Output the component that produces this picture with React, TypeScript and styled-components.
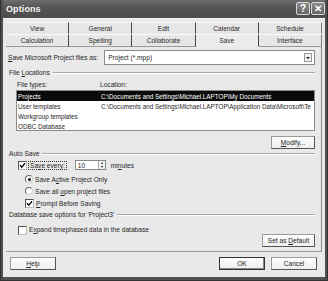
import React from 'react';
import styled, { createGlobalStyle } from 'styled-components';

const GlobalStyle = createGlobalStyle`
	html, body {
		margin: 0;
		padding: 0;
		background: #4a4a4a;
	}
	* {
		box-sizing: border-box;
	}
`;

const Window = styled.div`
	width: 328px;
	height: 281px;
	display: flex;
	flex-direction: column;
	background: #505050;
	border: 1px solid #333;
	border-top: none;
	padding: 0 2px 3px 2px;
	font-family: 'Liberation Sans', Arial, sans-serif;
	font-size: 6.6px;
	color: #262626;
	overflow: hidden;
`;

const TitleBar = styled.div`
	height: 18px;
	flex-shrink: 0;
	display: flex;
	align-items: center;
	justify-content: space-between;
	padding: 0 0 1px 3px;
	background: linear-gradient(#6e6e6e, #555 40%, #4c4c4c);
`;

const TitleText = styled.span`
	color: #f4f4f4;
	font-size: 9px;
	font-weight: bold;
	letter-spacing: 0.1px;
`;

const CaptionButtons = styled.div`
	display: flex;
	gap: 1px;
`;

const CaptionButton = styled.div`
	width: 14px;
	height: 13px;
	border: 1px solid #d8d8d8;
	border-radius: 2px;
	background: linear-gradient(#8a8a8a, #666);
	color: #fff;
	font-size: 10px;
	font-weight: bold;
	display: flex;
	align-items: center;
	justify-content: center;
	line-height: 1;
`;

const Body = styled.div`
	flex: 1;
	display: flex;
	flex-direction: column;
	background: #e9e9e9;
	padding: 3px 3px 0 3px;
	border-top: 1px solid #f6f6f6;
`;

const TabStrip = styled.div`
	display: flex;
	flex-direction: column;
`;

const TabRow = styled.div<{ $height: number }>`
	display: grid;
	grid-template-columns: repeat(5, 1fr);
	height: ${({ $height }) => $height}px;
`;

const Tab = styled.div<{ $active?: boolean; $bottom?: boolean; $last?: boolean }>`
	display: flex;
	align-items: center;
	justify-content: center;
	border-right: ${({ $last }) => ($last ? '1px solid #777' : '1.5px solid #444')};
	border-top: 1px solid #fafafa;
	border-bottom: ${({ $active, $bottom }) =>
		$bottom && !$active ? '1px solid #9a9a9a' : '1px solid transparent'};
	background: ${({ $active }) => ($active ? '#ececec' : '#e6e6e6')};
	color: #2a2a2a;
`;

const Panel = styled.div`
	flex: 0 0 205px;
	display: flex;
	flex-direction: column;
	padding: 3px 6px 0 2px;
	border-right: 1px solid #888;
	border-bottom: 1px solid #999;
`;

const Row = styled.div<{ $mt?: number; $h?: number; $indent?: number }>`
	display: flex;
	align-items: center;
	margin-top: ${({ $mt }) => $mt ?? 0}px;
	height: ${({ $h }) => ($h ? `${$h}px` : 'auto')};
	padding-left: ${({ $indent }) => $indent ?? 0}px;
`;

const Label = styled.span<{ $w?: number }>`
	white-space: nowrap;
	width: ${({ $w }) => ($w ? `${$w}px` : 'auto')};
	flex-shrink: 0;
`;

const Select = styled.div`
	margin-left: 6px;
	flex: 1;
	height: 15px;
	display: flex;
	align-items: center;
	justify-content: space-between;
	padding: 0 2px 0 3px;
	background: #fff;
	border: 1px solid #8a8a8a;
`;

const DropArrow = styled.div`
	width: 8px;
	height: 9px;
	border: 1px solid #999;
	background: #f2f2f2;
	display: flex;
	align-items: center;
	justify-content: center;
	&::after {
		content: '';
		border-left: 2px solid transparent;
		border-right: 2px solid transparent;
		border-top: 2.5px solid #111;
	}
`;

const GroupHeader = styled.div<{ $mt?: number }>`
	display: flex;
	align-items: center;
	gap: 3px;
	height: 9px;
	margin-top: ${({ $mt }) => $mt ?? 0}px;
	padding-left: 1px;
	&::after {
		content: '';
		flex: 1;
		border-top: 1px solid #a8a8a8;
		border-bottom: 1px solid #fff;
	}
`;

const ListBox = styled.div`
	margin: 1px 0 0 8px;
	height: 41px;
	background: #fff;
	border: 1px solid #8a8a8a;
`;

const ListItem = styled.div<{ $selected?: boolean }>`
	display: flex;
	height: 10px;
	align-items: center;
	padding-left: 1px;
	white-space: nowrap;
	overflow: hidden;
	font-size: 6.3px;
	background: ${({ $selected }) => ($selected ? '#0a0a0a' : 'transparent')};
	color: ${({ $selected }) => ($selected ? '#fff' : '#262626')};
`;

const Button = styled.div<{ $w: number }>`
	width: ${({ $w }) => $w}px;
	height: 13px;
	display: flex;
	align-items: center;
	justify-content: center;
	white-space: nowrap;
	background: linear-gradient(#fdfdfd, #eee);
	border: 1px solid #9a9a9a;
	border-right-color: #555;
	border-bottom-color: #555;
	color: #262626;
	flex-shrink: 0;
`;

const DefaultButton = styled(Button)`
	border: 1px solid #333;
	box-shadow: inset -1px -1px 0 #888;
`;

const Box = styled.div`
	width: 9px;
	height: 9px;
	flex-shrink: 0;
	background: #fff;
	border: 1px solid #555;
	border-right-color: #bbb;
	border-bottom-color: #bbb;
	margin-right: 2px;
	display: flex;
	align-items: center;
	justify-content: center;
`;

const Radio = styled.div<{ $on?: boolean }>`
	width: 8px;
	height: 8px;
	flex-shrink: 0;
	border-radius: 50%;
	background: #fff;
	border: 1px solid #666;
	border-right-color: #ccc;
	border-bottom-color: #ccc;
	margin-right: 2px;
	display: flex;
	align-items: center;
	justify-content: center;
	&::after {
		content: '';
		width: 3px;
		height: 3px;
		border-radius: 50%;
		background: ${({ $on }) => ($on ? '#111' : 'transparent')};
	}
`;

const Focus = styled.span`
	outline: 1px dotted #333;
	outline-offset: 0;
	padding: 0 1px;
	white-space: nowrap;
`;

const SpinBox = styled.div`
	margin-left: 9px;
	width: 31px;
	height: 10px;
	display: flex;
	align-items: stretch;
	background: #fff;
	border: 1px solid #888;
`;

const SpinValue = styled.span`
	flex: 1;
	padding-left: 2px;
	display: flex;
	align-items: center;
`;

const SpinArrows = styled.div`
	width: 7px;
	display: flex;
	flex-direction: column;
	border-left: 1px solid #aaa;
`;

const SpinArrow = styled.div<{ $up?: boolean }>`
	flex: 1;
	display: flex;
	align-items: center;
	justify-content: center;
	background: #f0f0f0;
	&::after {
		content: '';
		border-left: 1.5px solid transparent;
		border-right: 1.5px solid transparent;
		${({ $up }) => ($up ? 'border-bottom: 2px solid #222;' : 'border-top: 2px solid #222;')}
	}
`;

const Spacer = styled.div`
	flex: 1;
`;

const Footer = styled.div`
	display: flex;
	align-items: center;
	gap: 6px;
	padding: 5px 5px 0 4px;
`;

const Check = () => (
	<svg width="7" height="7" viewBox="0 0 7 7">
		<path d="M1 3.3 L2.8 5.2 L6 1.2" stroke="#111" strokeWidth="1.4" fill="none" />
	</svg>
);

const U: React.FC<React.PropsWithChildren> = ({ children }) => <u>{children}</u>;

const topTabs = ['View', 'General', 'Edit', 'Calendar', 'Schedule'];
const bottomTabs = ['Calculation', 'Spelling', 'Collaborate', 'Save', 'Interface'];

export default function App() {
	return (
		<>
			<GlobalStyle />
			<Window>
				<TitleBar>
					<TitleText>Options</TitleText>
					<CaptionButtons>
						<CaptionButton>?</CaptionButton>
						<CaptionButton>✕</CaptionButton>
					</CaptionButtons>
				</TitleBar>
				<Body>
					<TabStrip>
						<TabRow $height={12}>
							{topTabs.map((t, i) => (
								<Tab key={t} $last={i === 4}>
									{t}
								</Tab>
							))}
						</TabRow>
						<TabRow $height={13}>
							{bottomTabs.map((t, i) => (
								<Tab key={t} $bottom $active={t === 'Save'} $last={i === 4}>
									{t}
								</Tab>
							))}
						</TabRow>
					</TabStrip>
					<Panel>
						<Row $h={15}>
							<Label>
								<U>S</U>ave Microsoft Project files as:
							</Label>
							<Select>
								<span>Project (*.mpp)</span>
								<DropArrow />
							</Select>
						</Row>
						<GroupHeader $mt={3}>
							<span>
								File <U>L</U>ocations
							</span>
						</GroupHeader>
						<Row $mt={3} $h={9} $indent={9}>
							<Label $w={83}>File types:</Label>
							<Label>Location:</Label>
						</Row>
						<ListBox>
							<ListItem $selected>
								<Label $w={83}>Projects</Label>
								<Label>C:\Documents and Settings\Michael.LAPTOP\My Documents</Label>
							</ListItem>
							<ListItem>
								<Label $w={83}>User templates</Label>
								<Label>C:\Documents and Settings\Michael.LAPTOP\Application Data\Microsoft\Te</Label>
							</ListItem>
							<ListItem>
								<Label $w={83}>Workgroup templates</Label>
							</ListItem>
							<ListItem>
								<Label $w={83}>ODBC Database</Label>
							</ListItem>
						</ListBox>
						<Row $mt={5}>
							<Spacer />
							<Button $w={44}>
								<span>
									<U>M</U>odify...
								</span>
							</Button>
						</Row>
						<GroupHeader $mt={0}>
							<span>Auto Save</span>
						</GroupHeader>
						<Row $mt={2} $h={10} $indent={10}>
							<Box>
								<Check />
							</Box>
							<Focus>
								Sa<U>v</U>e every:
							</Focus>
							<SpinBox>
								<SpinValue>10</SpinValue>
								<SpinArrows>
									<SpinArrow $up />
									<SpinArrow />
								</SpinArrows>
							</SpinBox>
							<Label style={{ marginLeft: 5 }}>
								mi<U>n</U>utes
							</Label>
						</Row>
						<Row $mt={4} $h={10} $indent={17}>
							<Radio $on />
							<Label>
								Save A<U>c</U>tive Project Only
							</Label>
						</Row>
						<Row $mt={2} $h={10} $indent={17}>
							<Radio />
							<Label>
								Save all <U>o</U>pen project files
							</Label>
						</Row>
						<Row $mt={2} $h={10} $indent={17}>
							<Box>
								<Check />
							</Box>
							<Label>
								<U>P</U>rompt Before Saving
							</Label>
						</Row>
						<GroupHeader $mt={2}>
							<span>Database save options for 'Project3'</span>
						</GroupHeader>
						<Row $mt={7} $h={10} $indent={10} style={{ alignItems: 'flex-start' }}>
							<Box />
							<Label>
								E<U>x</U>pand timephased data in the database
							</Label>
							<Spacer />
							<Button $w={53} style={{ marginTop: 8 }}>
								<span>
									Set as <U>D</U>efault
								</span>
							</Button>
						</Row>
					</Panel>
					<Footer>
						<Button $w={46}>
							<span>
								<U>H</U>elp
							</span>
						</Button>
						<Spacer />
						<DefaultButton $w={46}>OK</DefaultButton>
						<Button $w={46}>Cancel</Button>
					</Footer>
				</Body>
			</Window>
		</>
	);
}
